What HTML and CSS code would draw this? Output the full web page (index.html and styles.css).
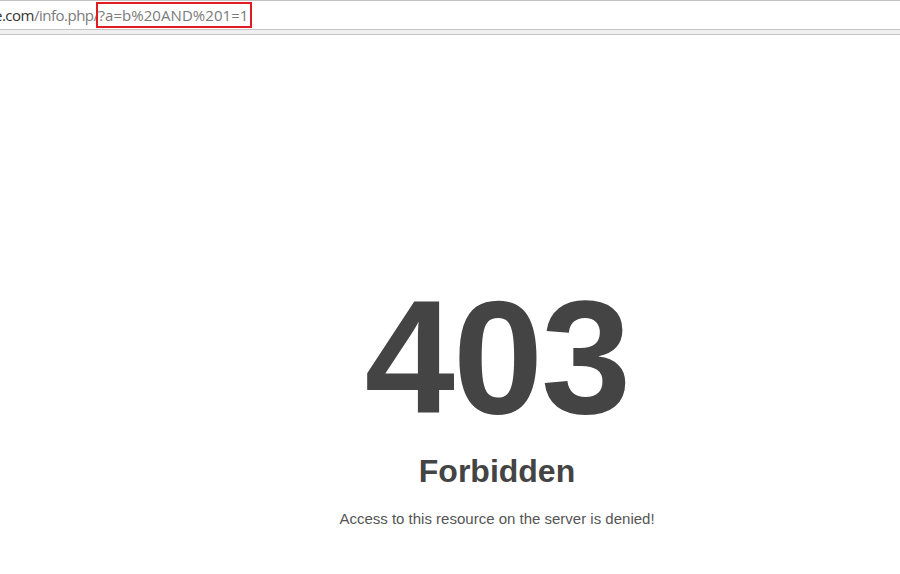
FILE: index.html
```html
<!DOCTYPE html>
<html>
<head>
<meta charset="utf-8">
<link rel="stylesheet" href="styles.css">
</head>
<body>
<div class="toolbar">
  <div class="address">
    <span class="host">e.com</span><span class="path">/info.php/</span><span class="query">?a=b%20AND%201=1</span>
  </div>
  <div class="band"></div>
</div>
<main class="content">
  <h1 class="code">403</h1>
  <h2 class="title">Forbidden</h2>
  <p class="message">Access to this resource on the server is denied!</p>
</main>
</body>
</html>
```
FILE: styles.css
```css
html, body {
  margin: 0;
  padding: 0;
  background: #fff;
}
body {
  width: 900px;
  height: 574px;
  overflow: hidden;
}
.toolbar {
  border-top: 1px solid #c3c3c3;
}
.address {
  height: 28px;
  display: flex;
  align-items: center;
  font-family: "Open Sans", "Noto Sans", sans-serif;
  font-size: 15px;
  color: #7a7a7a;
  white-space: nowrap;
  overflow: hidden;
  border-bottom: 1px solid #c3c3c3;
}
.host {
  color: #333;
  margin-left: -6px;
  letter-spacing: -0.5px;
}
.path {
  color: #7a7a7a;
  letter-spacing: -0.5px;
}
.query {
  color: #7a7a7a;
  border: 2px solid #e21b23;
  padding: 1px 2px 0 1px;
  height: 21px;
  line-height: 21px;
  margin-left: -3px;
  letter-spacing: 0.05px;
}
.band {
  height: 4px;
  background: #f0f0f0;
  border-bottom: 1px solid #c3c3c3;
}
.content {
  display: flex;
  flex-direction: column;
  align-items: center;
  padding-left: 94px;
  font-family: "Liberation Sans", Arial, sans-serif;
  color: #444;
}
.code {
  margin: 241px 0 0;
  font-size: 162px;
  line-height: 162px;
  font-weight: bold;
  letter-spacing: -2px;
}
.title {
  margin: 15px 0 0;
  font-size: 32px;
  line-height: 37px;
  font-weight: bold;
}
.message {
  margin: 20px 0 0;
  font-size: 15px;
  line-height: 18px;
  color: #555;
}
```
